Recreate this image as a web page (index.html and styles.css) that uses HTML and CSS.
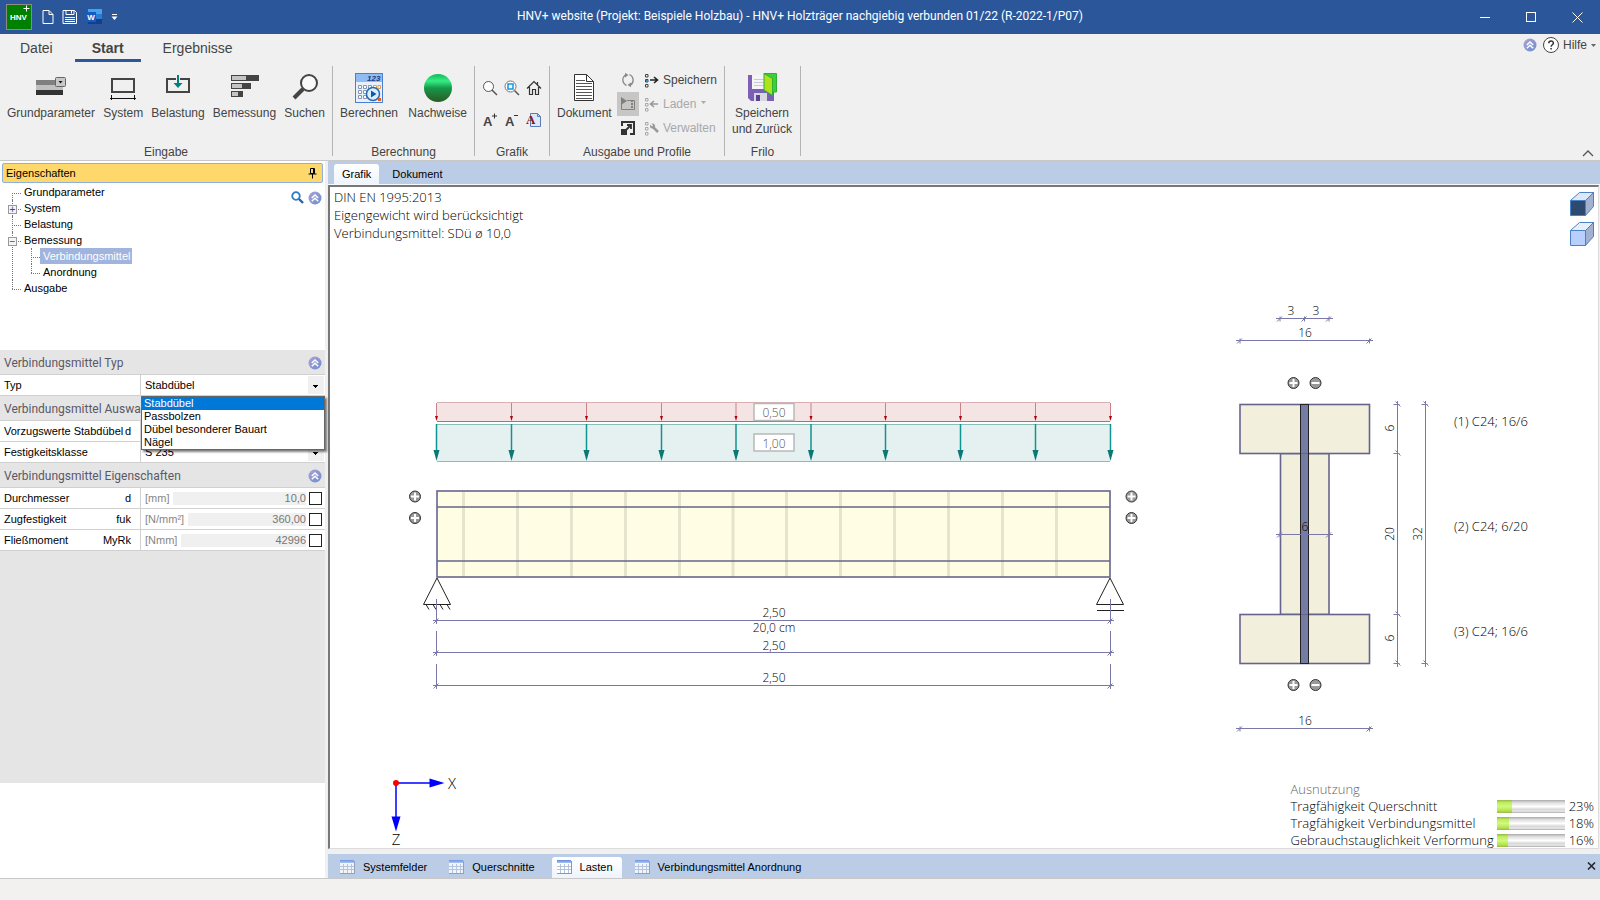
FILE: index.html
```html
<!DOCTYPE html>
<html lang="de">
<head>
    <meta charset="UTF-8">
    <meta name="viewport" content="width=device-width, initial-scale=1.0">
    <title>HNV+ website</title>
    <link rel="stylesheet" href="styles.css">
</head>
<body>

<!-- shared symbols -->
<svg class="defs" aria-hidden="true">
    <defs>
        <linearGradient id="g-chev" x1="0" y1="0" x2="1" y2="1">
            <stop offset="0" stop-color="#a9a3d6"/><stop offset="1" stop-color="#6f8ccb"/>
        </linearGradient>
        <linearGradient id="g-cell" x1="0" y1="0" x2="0" y2="1">
            <stop offset="0" stop-color="#5f88dc"/><stop offset="1" stop-color="#a9c4f4"/>
        </linearGradient>
        <symbol id="chev" viewBox="0 0 14 14">
            <circle cx="7" cy="7" r="6.5" fill="url(#g-chev)"/>
            <path d="M3.8 7 7 4l3.2 3M3.8 10.3 7 7.3l3.2 3" fill="none" stroke="#fff" stroke-width="1.5"/>
        </symbol>
        <symbol id="sheet" viewBox="0 0 15 14">
            <rect x="0" y="1" width="15" height="13" fill="#8a97ad"/>
            <rect x="0" y="1" width="14" height="12" fill="#fff"/>
            <rect x="0" y="0" width="14" height="3" fill="url(#g-cell)"/>
            <path d="M0 6.5h14M0 9.5h14M3.5 4v9M7.5 4v9M11.5 4v9" stroke="#b4c3dc" fill="none"/>
        </symbol>
        <symbol id="profile" viewBox="0 0 15 15">
            <path d="M1.5 1.5h2.500v2.500h-2.500zM1.500 6.500h2.500v2.500h-2.500zM1.500 11.500h2.500v2.500h-2.500z" fill="none" stroke="currentColor"/>
        </symbol>
    </defs>
</svg>

<header class="titlebar">
    <div class="quick">
        <svg class="logo" width="26" height="26" viewBox="0 0 26 26">
            <rect x="0.500" y="0.500" width="25" height="25" fill="#008000" stroke="#8c8c7c"/>
            <text x="4" y="16">HNV</text>
            <path d="M20.500 1.500v6M17.500 4.500h6" stroke="#fff"/>
        </svg>
        <button class="qbtn" aria-label="Neu">
            <svg width="12" height="16" viewBox="0 0 12 16"><path d="M1 1.500h6l4 4v9H1zM7 1.500v4h4" fill="none" stroke="#fff"/></svg>
        </button>
        <button class="qbtn" aria-label="Speichern">
            <svg width="16" height="16" viewBox="0 0 16 16"><path d="M1 1.500h11.500l2 2v11H1zM4 1.500v4h8v-4M9.500 2v2.500M3 8.500h10M3 10.500h10M3 12.500h10" fill="none" stroke="#fff"/></svg>
        </button>
        <button class="qbtn" aria-label="Word">
            <svg width="17" height="16" viewBox="0 0 17 16">
                <rect x="2" y="0" width="14" height="5" fill="#41a5ee"/>
                <rect x="2" y="5" width="14" height="5" fill="#2b7cd3"/>
                <rect x="2" y="10" width="14" height="5" fill="#103f91"/>
                <rect x="0" y="3" width="10" height="10" fill="#185abd"/>
                <text class="word" x="5" y="11">W</text>
            </svg>
        </button>
        <button class="qbtn" aria-label="Anpassen">
            <svg width="7" height="6" viewBox="0 0 7 6"><path d="M1 0.500h5" stroke="#fff"/><path d="M0.500 2.500h6L3.500 6z" fill="#fff"/></svg>
        </button>
    </div>
    <div class="title">HNV+ website (Projekt: Beispiele Holzbau) - HNV+ Holzträger nachgiebig verbunden 01/22 (R-2022-1/P07)</div>
    <div class="win">
        <button aria-label="Minimieren"><svg width="11" height="11"><path d="M0 5.500h10" stroke="#fff"/></svg></button>
        <button aria-label="Maximieren"><svg width="11" height="11"><rect x="0.500" y="0.500" width="9" height="9" fill="none" stroke="#fff"/></svg></button>
        <button aria-label="Schließen"><svg width="11" height="11"><path d="M0.500 0.500l10 10M10.500 0.500l-10 10" stroke="#fff"/></svg></button>
    </div>
</header>

<nav class="menu">
    <button class="menu-tab">Datei</button>
    <button class="menu-tab active">Start</button>
    <button class="menu-tab">Ergebnisse</button>
    <div class="help">
        <svg width="14" height="14"><use href="#chev"/></svg>
        <button class="help-btn">
            <svg width="16" height="16" viewBox="0 0 16 16">
                <circle cx="8" cy="8" r="7.500" fill="#fff" stroke="#444"/>
                <path d="M5.800 6.300c0-3 4.600-3 4.600-.2 0 1.700-2.300 1.700-2.300 3.700M8.100 11v1.600" fill="none" stroke="#333" stroke-width="1.500"/>
            </svg>
            Hilfe
            <svg width="5" height="3"><path d="M0 0h5L2.500 3z" fill="#666"/></svg>
        </button>
    </div>
</nav>

<section class="ribbon">
    <div class="group">
        <div class="tools">
            <button class="tool">
                <svg width="32" height="32" viewBox="0 0 32 32">
                    <rect x="1" y="8" width="27" height="5" fill="#808080"/><rect x="1" y="13" width="27" height="5" fill="#c0c0c0"/><rect x="1" y="18" width="27" height="5" fill="#333"/>
                    <rect x="20.500" y="5.500" width="10" height="9" rx="1" fill="#c8c8c8" stroke="#666"/><path d="M23.500 9h4L25.500 11.500z" fill="#111"/>
                </svg>
                Grundparameter
            </button>
            <button class="tool">
                <svg width="32" height="32" viewBox="0 0 32 32">
                    <rect x="5" y="7" width="22" height="13" fill="none" stroke="#444" stroke-width="2"/>
                    <path d="M3 26.500h26M4.500 23v5M27.500 23v5" stroke="#111" fill="none"/>
                </svg>
                System
            </button>
            <button class="tool">
                <svg width="32" height="32" viewBox="0 0 32 32">
                    <rect x="5" y="7" width="22" height="13" fill="none" stroke="#444" stroke-width="2"/>
                    <path d="M14 3h4v6h-4z" fill="#f0f0f0"/><path d="M15 3h2v8h3.500L16 16l-4.500-5H15z" fill="#00807c"/>
                </svg>
                Belastung
            </button>
            <button class="tool">
                <svg width="32" height="32" viewBox="0 0 32 32">
                    <rect x="3" y="3" width="28" height="6" fill="#444"/><rect x="4" y="4" width="14" height="4" fill="#c4c4c4"/>
                    <rect x="3" y="11" width="20" height="6" fill="#444"/><rect x="4" y="12" width="10" height="4" fill="#c4c4c4"/>
                    <rect x="3" y="19" width="12" height="6" fill="#444"/><rect x="4" y="20" width="6" height="4" fill="#c4c4c4"/>
                </svg>
                Bemessung
            </button>
            <button class="tool">
                <svg width="32" height="32" viewBox="0 0 32 32">
                    <circle cx="20" cy="11" r="8" fill="#fafafa" stroke="#444" stroke-width="2"/>
                    <path d="M14 17 5 26" stroke="#444" stroke-width="4"/>
                </svg>
                Suchen
            </button>
        </div>
        <div class="caption">Eingabe</div>
    </div>

    <div class="group">
        <div class="tools">
            <button class="tool">
                <svg width="32" height="32" viewBox="0 0 32 32">
                    <rect x="2.500" y="1.500" width="27" height="29" fill="#e8f1fb" stroke="#4c7fcf"/>
                    <rect x="3" y="2" width="26" height="8" fill="#8fbcf2"/>
                    <text class="digits" x="14" y="9">123</text>
                    <g fill="#fff" stroke="#8296b4">
                        <path d="M5.500 13.500h3v3h-3zM10.500 13.500h3v3h-3zM15.500 13.500h3v3h-3zM5.500 18.500h3v3h-3zM10.500 18.500h3v3h-3zM5.500 23.500h3v3h-3zM10.500 23.500h3v3h-3z"/>
                        <path d="M20.500 13.500h3v3h-3zM25 13.500h2.500v3H25z" stroke="#e0a050"/>
                    </g>
                    <circle cx="20" cy="22" r="6.500" fill="#d8efff" stroke="#2a6ab0" stroke-width="1.500"/>
                    <path d="M18 18.500v7l5.500-3.500z" fill="#12599f"/>
                    <rect x="25" y="26" width="3" height="3" fill="#e06030"/>
                </svg>
                Berechnen
            </button>
            <button class="tool">
                <svg width="32" height="32" viewBox="0 0 32 32">
                    <defs>
                        <linearGradient id="g-ball" x1="0" y1="0" x2="0" y2="1">
                            <stop offset="0" stop-color="#12b85a"/><stop offset="0.25" stop-color="#35ee82"/><stop offset="0.5" stop-color="#16984a"/><stop offset="1" stop-color="#2b5a22"/>
                        </linearGradient>
                    </defs>
                    <circle cx="16" cy="16" r="14" fill="url(#g-ball)"/>
                </svg>
                Nachweise
            </button>
        </div>
        <div class="caption">Berechnung</div>
    </div>

    <div class="group">
        <div class="icon-grid">
            <button aria-label="Zoom">
                <svg width="16" height="16" viewBox="0 0 16 16"><circle cx="6.500" cy="6.500" r="5" fill="#fff" stroke="#555"/><path d="M10 10l5 5" stroke="#555" stroke-width="1.500"/></svg>
            </button>
            <button aria-label="Zoom Fenster">
                <svg width="16" height="16" viewBox="0 0 16 16"><circle cx="6.500" cy="6.500" r="5.500" fill="#fff" stroke="#777"/><rect x="4" y="4" width="5" height="5" fill="none" stroke="#1296e0" stroke-width="1.500"/><path d="M10.500 10.500l4.500 4.500" stroke="#555" stroke-width="1.500"/></svg>
            </button>
            <button aria-label="Gesamtansicht">
                <svg width="16" height="16" viewBox="0 0 16 16"><path d="M1 8.500 8 1.500l7 7M3.500 7v7.500h3v-5h3v5h3V7M11.500 4.500V2" fill="none" stroke="#333" stroke-width="1.200"/></svg>
            </button>
            <button aria-label="Schrift größer">
                <svg width="16" height="16" viewBox="0 0 16 16"><text class="glyph" x="1" y="14">A</text><path d="M12.500 1.500v5M10 4h5" stroke="#333"/></svg>
            </button>
            <button aria-label="Schrift kleiner">
                <svg width="16" height="16" viewBox="0 0 16 16"><text class="glyph" x="1" y="14">A</text><path d="M10 3.500h4" stroke="#333"/></svg>
            </button>
            <button aria-label="Schriftart">
                <svg width="16" height="16" viewBox="0 0 16 16"><path d="M4.500 1.500h7l3 3v10h-10z" fill="#dce8f8" stroke="#5b7cb5"/><path d="M11.500 1.500v3h3" fill="none" stroke="#5b7cb5"/><text class="glyph red" x="0" y="12">A</text></svg>
            </button>
        </div>
        <div class="caption">Grafik</div>
    </div>

    <div class="group">
        <div class="tools">
            <button class="tool">
                <svg width="32" height="32" viewBox="0 0 32 32">
                    <path d="M6.500 2.500h12l7 7v19h-19z" fill="#fff" stroke="#333"/><path d="M18.500 2.500v7h7" fill="none" stroke="#333"/>
                    <path d="M8 8.500h9M8 11.500h16M8 14.500h16M8 17.500h16M8 20.500h16M8 23.500h16M8 26.500h16" stroke="#555"/>
                </svg>
                Dokument
            </button>
            <div class="stack">
                <button aria-label="Aktualisieren">
                    <svg width="16" height="16" viewBox="0 0 16 16"><path d="M6.500 13.500a6 6 0 0 1-1-10.500M9.500 2.500a6 6 0 0 1 1 10.500" fill="none" stroke="#888" stroke-width="1.300"/><path d="M5 .8 8.500 3 5 5.500zM11 15.200 7.500 13l3.500-2.500z" fill="#888"/></svg>
                </button>
                <button class="pressed" aria-label="Vorschau">
                    <svg width="18" height="16" viewBox="0 0 18 16"><path d="M2 1l6 4-6 4z" fill="#808080"/><path d="M2.500 8v5.500h13v-9H8" fill="none" stroke="#808080"/><path d="M13 4v9" stroke="#808080" stroke-width="2" stroke-dasharray="2 1"/></svg>
                </button>
                <button aria-label="Vergrößern">
                    <svg width="16" height="16" viewBox="0 0 16 16"><path d="M2 6V2h12v12h-4" fill="none" stroke="#333" stroke-width="2"/><path d="M1 9h6v6H1z" fill="#333"/><path d="M6 10l5-5M7 5h4v4" fill="none" stroke="#333" stroke-width="1.800"/></svg>
                </button>
            </div>
            <div class="stack wide">
                <button>
                    <svg width="15" height="15" viewBox="0 0 15 15"><use href="#profile"/><path d="M2 7h2v2H2z" fill="#1296e0"/><path d="M6 7h7M10 4l3.500 3-3.500 3" fill="none" stroke="#222" stroke-width="1.600"/></svg>
                    Speichern
                </button>
                <button disabled>
                    <svg width="15" height="15" viewBox="0 0 15 15"><use href="#profile"/><path d="M14 7H7M10 4 6.500 7l3.500 3" fill="none" stroke="#999" stroke-width="1.600"/></svg>
                    Laden
                    <svg class="caret" width="5" height="3"><path d="M0 0h5L2.500 3z" fill="#aaa"/></svg>
                </button>
                <button disabled>
                    <svg width="15" height="15" viewBox="0 0 15 15"><use href="#profile"/><path d="M8 5l6 6" stroke="#999" stroke-width="2.500"/><circle cx="8.500" cy="5" r="2.500" fill="#999"/><path d="M6 2l2.500 3" stroke="#f0f0f0" stroke-width="1.500"/></svg>
                    Verwalten
                </button>
            </div>
        </div>
        <div class="caption">Ausgabe und Profile</div>
    </div>

    <div class="group">
        <div class="tools">
            <button class="tool">
                <svg width="32" height="32" viewBox="0 0 32 32">
                    <path d="M2 3h26v26H5l-3-3z" fill="#7a5fb5"/><rect x="6" y="3" width="14" height="14" fill="#f4f4f8"/>
                    <path d="M8 7.500h10M8 10.500h10M8 13.500h10" stroke="#c8c8d0"/><rect x="8" y="21" width="13" height="8" fill="#d8d8e0"/><rect x="10" y="23" width="4" height="6" fill="#5a4490"/>
                    <path d="M18 1.500h12.500V20H26z" fill="#3ccf3c" stroke="#2fae38"/><path d="M18 1.500l8.500 5v17L18 18z" fill="#aee31c" stroke="#2fae38"/>
                </svg>
                Speichern<br>und Zurück
            </button>
        </div>
        <div class="caption">Frilo</div>
    </div>
    <button class="collapse" aria-label="Menüband reduzieren"><svg width="12" height="7"><path d="M1 6l5-5 5 5" fill="none" stroke="#555" stroke-width="1.300"/></svg></button>
</section>

<main class="work">
    <aside class="panel">
        <div class="panel-head">
            <span>Eigenschaften</span>
            <svg width="9" height="11" viewBox="0 0 9 11"><path d="M2.500 0.500h4v5h-4zM5.500 1v4M0.500 6h8M4.500 6v4.500" fill="none" stroke="#000"/></svg>
        </div>
        <div class="tree-box">
            <ul class="tree">
                <li>Grundparameter</li>
                <li><button class="knob" aria-label="System aufklappen">+</button>System</li>
                <li>Belastung</li>
                <li><button class="knob" aria-label="Bemessung zuklappen">−</button>Bemessung
                    <ul>
                        <li><span class="selected">Verbindungsmittel</span></li>
                        <li>Anordnung</li>
                    </ul>
                </li>
                <li>Ausgabe</li>
            </ul>
            <div class="tree-tools">
                <svg width="13" height="13" viewBox="0 0 13 13"><circle cx="5" cy="5" r="3.800" fill="#fff" stroke="#2e7cc8" stroke-width="1.800"/><path d="M8 8l4 4" stroke="#2b62a8" stroke-width="2.400"/></svg>
                <svg width="14" height="14"><use href="#chev"/></svg>
            </div>
        </div>

        <form class="props">
            <h2>Verbindungsmittel Typ <svg width="14" height="14"><use href="#chev"/></svg></h2>
            <div class="row">
                <label for="typ">Typ</label>
                <div class="value">
                    <select id="typ"><option>Stabdübel</option></select>
                    <ul class="dropdown" role="listbox">
                        <li class="hit" role="option">Stabdübel</li>
                        <li role="option">Passbolzen</li>
                        <li role="option">Dübel besonderer Bauart</li>
                        <li role="option">Nägel</li>
                    </ul>
                </div>
            </div>
            <h2>Verbindungsmittel Auswahl <svg width="14" height="14"><use href="#chev"/></svg></h2>
            <div class="row">
                <label for="vorzug">Vorzugswerte Stabdübel <span>d</span></label>
                <div class="value"><select id="vorzug"><option>10,0</option></select></div>
            </div>
            <div class="row">
                <label for="klasse">Festigkeitsklasse</label>
                <div class="value"><select id="klasse"><option>S 235</option></select></div>
            </div>
            <h2>Verbindungsmittel Eigenschaften <svg width="14" height="14"><use href="#chev"/></svg></h2>
            <div class="row">
                <label for="durchmesser">Durchmesser <span>d</span></label>
                <div class="value"><span class="unit">[mm]</span><input id="durchmesser" type="text" value="10,0" readonly><input type="checkbox" aria-label="Durchmesser ändern"></div>
            </div>
            <div class="row">
                <label for="zug">Zugfestigkeit <span>fuk</span></label>
                <div class="value"><span class="unit">[N/mm²]</span><input id="zug" type="text" value="360,00" readonly><input type="checkbox" aria-label="Zugfestigkeit ändern"></div>
            </div>
            <div class="row">
                <label for="fliess">Fließmoment <span>MyRk</span></label>
                <div class="value"><span class="unit">[Nmm]</span><input id="fliess" type="text" value="42996" readonly><input type="checkbox" aria-label="Fließmoment ändern"></div>
            </div>
        </form>
        <div class="panel-foot"></div>
    </aside>

    <section class="view">
        <div class="view-tabs">
            <button class="active">Grafik</button>
            <button>Dokument</button>
        </div>

        <div class="canvas">
            <svg class="drawing" viewBox="330 187 1268 661" preserveAspectRatio="xMinYMin meet">
                <defs>
                    <g id="ra"><path d="M0 403v14" stroke="#c98088"/><path d="M-1.500 416h3L0 421z" fill="#b00010"/></g>
                    <g id="ta"><path d="M0 424v28" stroke="#109490" stroke-width="1.500"/><path d="M-3 450h6L0 461z" fill="#0a7874"/></g>
                    <g id="rib"><path d="M0 492v85" stroke="#e5e4cc" stroke-width="3"/></g>
                    <g id="plus"><circle r="5.500" fill="#999" stroke="#333"/><path d="M-4 0h8M0-4v8" stroke="#fff" stroke-width="2"/></g>
                    <g id="minus"><circle r="5.500" fill="#999" stroke="#333"/><path d="M-4 0h8" stroke="#fff" stroke-width="2"/></g>
                    <g id="th"><path d="M0-2v5M-3 3l5-5"/></g>
                    <g id="tv"><path d="M-4 0h6M-2-3l5 5"/></g>
                </defs>

                <!-- loads -->
                <rect x="437" y="403" width="673" height="18" fill="#f4e4e4"/>
                <path d="M437 402.500h673" stroke="#d8b0b4"/>
                <path d="M437 421.500h673" stroke="#b56a72"/>
                <rect x="437" y="424" width="673" height="37" fill="#e5f0f0"/>
                <path d="M437 424.500h673M437 461.500h673" stroke="#8dbdb9"/>
                <g>
                    <use href="#ra" x="436.500"/><use href="#ra" x="511.500"/><use href="#ra" x="586.500"/><use href="#ra" x="661.500"/><use href="#ra" x="736"/>
                    <use href="#ra" x="811"/><use href="#ra" x="885.500"/><use href="#ra" x="960.500"/><use href="#ra" x="1035.500"/><use href="#ra" x="1110.500"/>
                </g>
                <g>
                    <use href="#ta" x="436.500"/><use href="#ta" x="511.500"/><use href="#ta" x="586.500"/><use href="#ta" x="661.500"/><use href="#ta" x="736"/>
                    <use href="#ta" x="811"/><use href="#ta" x="885.500"/><use href="#ta" x="960.500"/><use href="#ta" x="1035.500"/><use href="#ta" x="1110.500"/>
                </g>
                <g fill="#fff" stroke="#b8b8b8" stroke-width="1.500">
                    <rect x="754" y="403.500" width="40" height="17"/>
                    <rect x="754" y="434" width="40" height="17"/>
                </g>
                <g class="mid soft"><text x="774" y="417">0,50</text><text x="774" y="448">1,00</text></g>

                <!-- beam -->
                <rect x="437" y="491" width="673" height="86" fill="#fffde3"/>
                <g>
                    <use href="#rib" x="463.500"/><use href="#rib" x="517.500"/><use href="#rib" x="571.500"/><use href="#rib" x="625.500"/><use href="#rib" x="679.500"/><use href="#rib" x="733"/>
                    <use href="#rib" x="786.500"/><use href="#rib" x="840.500"/><use href="#rib" x="894.500"/><use href="#rib" x="948.500"/><use href="#rib" x="1002.500"/><use href="#rib" x="1056.500"/>
                </g>
                <path d="M437 507h673M437 561h673" stroke="#66648f" stroke-width="1.600"/>
                <rect x="437" y="491" width="673" height="86" fill="none" stroke="#66648f" stroke-width="1.600"/>
                <use href="#plus" x="415" y="496.500"/><use href="#plus" x="415" y="518"/>
                <use href="#plus" x="1131.500" y="496.500"/><use href="#plus" x="1131.500" y="518"/>

                <!-- supports -->
                <g fill="none" stroke="#222">
                    <path d="M437 578l-13.500 26.500h27zM426 604.500l3 5M433 604.500l3 5M440 604.500l3 5M447 604.500l3 5"/>
                    <path d="M1110 578l-13.500 26.500h27zM1097 610.500h27"/>
                </g>

                <!-- beam dimensions -->
                <g class="dim">
                    <path d="M433 620.500h681M436.500 599v25M1110.500 599v25"/>
                    <path d="M433 652.500h681M436.500 631v25M1110.500 631v25"/>
                    <path d="M433 685.500h681M436.500 664v25M1110.500 664v25"/>
                    <use href="#th" x="436.500" y="620.500"/><use href="#th" x="1110.500" y="620.500"/>
                    <use href="#th" x="436.500" y="652.500"/><use href="#th" x="1110.500" y="652.500"/>
                    <use href="#th" x="436.500" y="685.500"/><use href="#th" x="1110.500" y="685.500"/>
                </g>
                <g class="mid">
                    <text x="774" y="617">2,50</text>
                    <text x="774" y="632">20,0 cm</text>
                    <text x="774" y="650">2,50</text>
                    <text x="774" y="682">2,50</text>
                </g>

                <!-- cross section -->
                <g fill="#f2efdc" stroke="#66648f" stroke-width="1.600">
                    <rect x="1280.500" y="453.500" width="48.500" height="161"/>
                    <rect x="1240" y="404.500" width="129.500" height="49"/>
                    <rect x="1240" y="614.500" width="129.500" height="49"/>
                </g>
                <rect x="1300.500" y="404.500" width="8" height="259" fill="#757ca3" stroke="#222"/>
                <path d="M1301 453.500h7M1301 614.500h7" stroke="#66648f"/>
                <use href="#plus" x="1293.500" y="383"/><use href="#minus" x="1315.500" y="383"/>
                <use href="#plus" x="1293.500" y="685"/><use href="#minus" x="1315.500" y="685"/>
                <g class="dim">
                    <path d="M1276 318.500h57M1236 340.500h137M1236 728.500h137M1276 534.500h57M1397.500 401v266M1425.500 401v266"/>
                    <use href="#th" x="1280" y="318.500"/><use href="#th" x="1304.500" y="318.500"/><use href="#th" x="1329" y="318.500"/>
                    <use href="#th" x="1240" y="340.500"/><use href="#th" x="1369.500" y="340.500"/>
                    <use href="#th" x="1240" y="728.500"/><use href="#th" x="1369.500" y="728.500"/>
                    <use href="#th" x="1280" y="534.500"/><use href="#th" x="1329" y="534.500"/>
                    <use href="#tv" x="1397.500" y="404.500"/><use href="#tv" x="1397.500" y="453.500"/><use href="#tv" x="1397.500" y="614.500"/><use href="#tv" x="1397.500" y="663.500"/>
                    <use href="#tv" x="1425.500" y="404.500"/><use href="#tv" x="1425.500" y="663.500"/>
                </g>
                <g class="mid">
                    <text x="1291" y="315">3</text><text x="1316" y="315">3</text>
                    <text x="1305" y="337">16</text><text x="1305" y="725">16</text>
                    <text x="1305" y="531">6</text>
                    <text transform="translate(1394 428) rotate(-90)">6</text>
                    <text transform="translate(1394 534) rotate(-90)">20</text>
                    <text transform="translate(1422 534) rotate(-90)">32</text>
                    <text transform="translate(1394 638) rotate(-90)">6</text>
                </g>
                <text x="1454" y="426">(1) C24; 16/6</text>
                <text x="1454" y="531">(2) C24; 6/20</text>
                <text x="1454" y="636">(3) C24; 16/6</text>

                <!-- axes -->
                <path d="M396 783h34M396 783v34" stroke="#0000ff" stroke-width="1.500"/>
                <path d="M429.500 778.500v9l15-4.500zM391.500 816.500h9l-4.500 15z" fill="#0000ff"/>
                <circle cx="396" cy="783" r="3" fill="#f00"/>
                <g class="mid axis"><text x="452" y="789">X</text><text x="396" y="845">Z</text></g>
            </svg>

            <div class="notes">
                DIN EN 1995:2013<br>
                Eigengewicht wird berücksichtigt<br>
                Verbindungsmittel: SDü ø 10,0
            </div>

            <div class="cubes">
                <button aria-label="Frontansicht">
                    <svg width="24" height="24" viewBox="0 0 24 24"><g stroke="#4a82c4" stroke-linejoin="round"><path d="M0.500 8.500 9.500 0.500h14l-8 8z" fill="#dce8fa"/><path d="M15.500 8.500l8-8v14l-8 9z" fill="#a3b1d0"/><path d="M0.500 8.500h15v15h-15z" fill="#2d4a70"/></g></svg>
                </button>
                <button aria-label="3D-Ansicht">
                    <svg width="24" height="24" viewBox="0 0 24 24"><g stroke="#4a82c4" stroke-linejoin="round"><path d="M0.500 8.500 9.500 0.500h14l-8 8z" fill="#e6effc"/><path d="M15.500 8.500l8-8v14l-8 9z" fill="#a3b1d0"/><path d="M0.500 8.500h15v15h-15z" fill="#b9d0ff"/></g></svg>
                </button>
            </div>

            <table class="usage">
                <caption>Ausnutzung</caption>
                <tr><th>Tragfähigkeit Querschnitt</th><td><div class="bar"><div style="width: 23%"></div></div></td><td>23%</td></tr>
                <tr><th>Tragfähigkeit Verbindungsmittel</th><td><div class="bar"><div style="width: 18%"></div></div></td><td>18%</td></tr>
                <tr><th>Gebrauchstauglichkeit Verformung</th><td><div class="bar"><div style="width: 16%"></div></div></td><td>16%</td></tr>
            </table>
        </div>

        <div class="sheet-tabs">
            <button><svg width="15" height="14"><use href="#sheet"/></svg>Systemfelder</button>
            <button><svg width="15" height="14"><use href="#sheet"/></svg>Querschnitte</button>
            <button class="active"><svg width="15" height="14"><use href="#sheet"/></svg>Lasten</button>
            <button><svg width="15" height="14"><use href="#sheet"/></svg>Verbindungsmittel Anordnung</button>
            <button class="close" aria-label="Schließen"><svg width="9" height="8"><path d="M1 0.500l7 7M8 0.500l-7 7" stroke="#000" stroke-width="1.600"/></svg></button>
        </div>
    </section>
</main>

<footer class="status"></footer>

</body>
</html>
```
FILE: styles.css
```css
:root {
    --title-color: #2b579a;
    --ribbon-color: #f0f0f0;
    --strip-color: #bbcde6;
    --line-color: #d0d0d0;
    --text-color: #444;
    --ui-font: "Liberation Sans", Arial, sans-serif;
    --head-font: Roboto, "Open Sans", sans-serif;
    --draw-font: "Open Sans", "Noto Sans", sans-serif;
}

* {
    box-sizing: border-box;
}

body {
    margin: 0;
    height: 100vh;
    display: flex;
    flex-direction: column;
    font-family: var(--ui-font);
    font-size: 11px;
    background: #f2f1f0;
    overflow: hidden;
}

button {
    font: inherit;
    color: inherit;
    background: none;
    border: none;
    padding: 0;
    cursor: pointer;
}

svg {
    display: block;
    flex: none;
}

.defs {
    position: absolute;
    width: 0;
    height: 0;
}

/* title bar */
.titlebar {
    display: grid;
    grid-template-columns: 1fr auto 1fr;
    align-items: center;
    height: 34px;
    background: var(--title-color);
    color: #fff;
}

.quick {
    display: flex;
    align-items: center;
    gap: 8px;
    padding-left: 6px;
}

.logo {
    margin-right: 2px;
}

.logo text {
    font: bold 8px var(--ui-font);
    fill: #fff;
}

.word {
    font: bold 8px var(--ui-font);
    fill: #fff;
    text-anchor: middle;
}

.title {
    font: 12px/16px var(--head-font);
    margin-bottom: 2px;
}

.win {
    display: flex;
    justify-content: flex-end;
}

.win button {
    width: 46px;
    height: 34px;
    display: grid;
    place-items: center;
}

/* menu */
.menu {
    display: flex;
    align-items: stretch;
    height: 28px;
    padding-left: 6px;
    background: var(--ribbon-color);
    color: var(--text-color);
}

.menu-tab {
    font-size: 14px;
    padding: 3px 14px 0;
    margin-right: 8px;
    border-bottom: 3px solid transparent;
}

.menu-tab.active {
    font-weight: bold;
    padding: 3px 17px 0;
    border-color: var(--title-color);
}

.help {
    display: flex;
    align-items: center;
    gap: 6px;
    margin: 0 4px 6px auto;
}

.help-btn {
    display: flex;
    align-items: center;
    gap: 4px;
    font-size: 12px;
}

/* ribbon */
.ribbon {
    position: relative;
    display: grid;
    grid-template-columns: 333px 142px 75px 175px 76px;
    height: 99px;
    padding-top: 4px;
    background: var(--ribbon-color);
    border-bottom: 1px solid #c8c8c8;
    color: var(--text-color);
    font-size: 12px;
}

.group {
    display: flex;
    flex-direction: column;
    justify-content: space-between;
    margin-bottom: 4px;
    border-right: 1px solid #b4b4b4;
}

.tools {
    display: flex;
    justify-content: space-between;
    padding: 6px 7px 0;
}

.tool {
    display: flex;
    flex-direction: column;
    align-items: center;
    gap: 1px;
    line-height: 16px;
    text-align: center;
}

.caption {
    text-align: center;
    line-height: 16px;
    margin-bottom: -4px;
}

.icon-grid {
    display: grid;
    grid-template-columns: repeat(3, 16px);
    justify-content: center;
    gap: 16px 6px;
    padding-top: 14px;
}

.glyph {
    font: bold 13px var(--ui-font);
    fill: #444;
}

.glyph.red {
    font-family: "Liberation Serif", serif;
    fill: #8b1020;
}

.digits {
    font: italic bold 8px var(--ui-font);
    fill: #1c3f80;
}

.stack {
    display: flex;
    flex-direction: column;
    margin-top: -4px;
}

.stack button {
    display: flex;
    align-items: center;
    justify-content: center;
    gap: 4px;
    height: 24px;
    width: 22px;
}

.stack .pressed {
    background: #c8c6c4;
}

.stack.wide button {
    justify-content: flex-start;
    width: auto;
}

.stack button:disabled {
    color: #a8a8a8;
}

.caret {
    margin: -4px 0 0 1px;
}

.collapse {
    position: absolute;
    right: 6px;
    bottom: 3px;
}

/* work area */
.work {
    flex: 1;
    display: grid;
    grid-template-columns: 325px 1fr;
    gap: 3px;
    min-height: 0;
    background: #f0f0f0;
    border-bottom: 1px solid #c8c8c8;
}

.panel {
    display: flex;
    flex-direction: column;
    background: #fff;
}

.panel-head {
    display: flex;
    align-items: center;
    justify-content: space-between;
    height: 20px;
    margin: 2px 2px 1px;
    padding: 0 5px 0 3px;
    background: #ffd86c;
    border: 1px solid #8fb0de;
    border-radius: 2px;
}

.tree-box {
    display: flex;
    justify-content: space-between;
    height: 166px;
}

.tree, .tree ul {
    list-style: none;
    margin: 0;
    padding: 0;
    line-height: 16px;
}

.tree li {
    position: relative;
    padding-left: 24px;
}

.tree li li {
    padding-left: 19px;
}

.tree li::before {
    content: "";
    position: absolute;
    left: 12px;
    top: 0;
    height: 100%;
    border-left: 1px dotted #777;
}

.tree li::after {
    content: "";
    position: absolute;
    left: 12px;
    top: 9px;
    width: 9px;
    border-top: 1px dotted #777;
}

.tree li:first-child::before {
    top: 9px;
    height: 7px;
}

.tree li:last-child::before {
    height: 9px;
}

.tree li li::before,
.tree li li::after {
    left: 7px;
}

.tree li li:first-child::before {
    top: 0;
    height: 100%;
}

.knob {
    position: absolute;
    z-index: 1;
    left: 8px;
    top: 5px;
    width: 9px;
    height: 9px;
    font-size: 10px;
    line-height: 7px;
    background: #f4f4f4;
    border: 1px solid #999;
    color: #2b4a90;
}

.selected {
    display: inline-block;
    margin-left: -3px;
    padding: 0 2px 0 3px;
    background: #a0b4de;
    color: #fff;
}

.tree-tools {
    display: flex;
    gap: 4px;
    padding: 7px 3px 0 0;
}

.props h2 {
    display: flex;
    align-items: center;
    justify-content: space-between;
    height: 25px;
    margin: 0;
    padding: 2px 3px 0 4px;
    font: 12px/16px var(--head-font);
    color: #5a5868;
    background: #e5e5e5;
    border-bottom: 1px solid var(--line-color);
}

.row {
    display: grid;
    grid-template-columns: 140px minmax(0, 1fr);
    height: 21px;
    border-bottom: 1px solid var(--line-color);
}

.row label {
    display: flex;
    align-items: center;
    justify-content: space-between;
    padding: 0 9px 0 4px;
    white-space: nowrap;
}

.value {
    position: relative;
    display: flex;
    align-items: center;
    padding: 0 3px 0 4px;
    border-left: 1px solid var(--line-color);
}

.value select {
    appearance: none;
    flex: 1;
    height: 18px;
    margin-right: -2px;
    padding: 0;
    font: inherit;
    border: none;
    border-radius: 0;
    background:
        linear-gradient(#000, #000) right 6px center / 5px 1px no-repeat,
        linear-gradient(#000, #000) right 7px top 10px / 3px 1px no-repeat,
        linear-gradient(#000, #000) right 8px top 11px / 1px 1px no-repeat,
        linear-gradient(#f0f0f0, #f0f0f0) right / 16px 100% no-repeat,
        #fff;
}

.unit {
    color: #868686;
}

.value input[type="text"] {
    flex: 1;
    min-width: 0;
    height: 13px;
    margin: 0 3px 0 4px;
    padding: 0;
    font: inherit;
    color: #777;
    text-align: right;
    background: #f0f0f0;
    border: none;
}

.value input[type="checkbox"] {
    appearance: none;
    flex: none;
    width: 13px;
    height: 13px;
    margin: 0;
    background: #fff;
    border: 1px solid #222;
}

.dropdown {
    position: absolute;
    z-index: 2;
    top: 100%;
    left: 0;
    right: 0;
    list-style: none;
    margin: 1px 0 0;
    padding: 0;
    line-height: 13px;
    background: #fff;
    border: 1px solid #666;
    box-shadow: 2px 2px 2px rgba(0, 0, 0, 0.5);
}

.dropdown li {
    padding-left: 2px;
}

.dropdown .hit {
    background: #0078d7;
    color: #fff;
}

.panel-foot {
    flex: 1;
    margin-bottom: 95px;
    background: #e5e5e5;
}

/* view */
.view {
    display: flex;
    flex-direction: column;
    min-width: 0;
}

.view-tabs, .sheet-tabs {
    display: flex;
    align-items: stretch;
    background: var(--strip-color);
}

.view-tabs {
    height: 24px;
    padding: 3px 6px 0;
    border-bottom: 1px solid #f6f9fd;
}

.view-tabs button {
    padding: 0 8px;
    margin-right: 5px;
}

.view-tabs .active, .sheet-tabs .active {
    background: linear-gradient(#fff, #eef4fd);
    border-radius: 3px 3px 0 0;
}

.canvas {
    position: relative;
    flex: 1;
    min-height: 0;
    margin: 0 1px 5px 0;
    background: #fff;
    border: 1px solid #dcdcdc;
    border-top: 2px solid #777;
    border-left: 2px solid #777;
    font: 300 13px/18px var(--draw-font);
    overflow: hidden;
}

.drawing {
    width: 100%;
    height: 100%;
}

.drawing text {
    fill: #000;
}

.drawing .mid {
    font-size: 12px;
}

.drawing .mid text {
    text-anchor: middle;
}

.drawing .soft text {
    fill: #555;
}

.drawing .axis {
    font-size: 15px;
}

.dim {
    fill: none;
    stroke: #7a78a8;
}

.notes {
    position: absolute;
    top: 1px;
    left: 4px;
    color: #000;
}

.cubes {
    position: absolute;
    top: 5px;
    right: 4px;
    display: grid;
    gap: 6px;
}

.usage {
    position: absolute;
    right: 4px;
    bottom: -1px;
    border-collapse: collapse;
    line-height: 17px;
    color: #000;
}

.usage caption {
    text-align: left;
    color: #666;
}

.usage th {
    font-weight: inherit;
    text-align: left;
    padding: 0 2px 0 0;
}

.usage td {
    padding: 0 0 0 1px;
}

.usage td:last-child {
    padding-left: 4px;
}

.bar {
    width: 68px;
    height: 13px;
    background: linear-gradient(#aaa, #ddd 20%, #fff 50%, #d4d4d4 75%, #eee 85%, #aaa);
}

.bar div {
    height: 100%;
    background: linear-gradient(#92b848, #c0ec60 20%, #d0fa7c 50%, #b4e04c 85%, #92b848);
}

.sheet-tabs {
    height: 24px;
    padding: 3px 4px 0 7px;
}

.sheet-tabs button {
    display: flex;
    align-items: center;
    gap: 8px;
    padding: 0 9px 2px 5px;
    margin-right: 8px;
}

.sheet-tabs button:not(.active) svg {
    opacity: 0.8;
}

.sheet-tabs .close {
    margin: 0 0 0 auto;
    padding: 0 0 3px;
}

.status {
    height: 21px;
    background: #f2f1f0;
}
```
